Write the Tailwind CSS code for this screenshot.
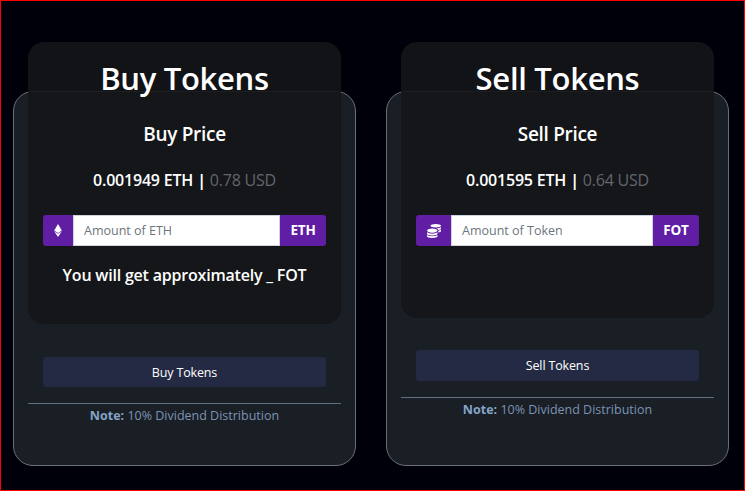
<!DOCTYPE html>
<html lang="en">
<head>
  <meta charset="UTF-8" />
  <meta name="viewport" content="width=device-width, initial-scale=1.0" />
  <title>Token Sale</title>
  <script src="https://cdn.jsdelivr.net/npm/@tailwindcss/browser@4"></script>
</head>
<body class="bg-[#00000a] overflow-hidden">
  <div class="h-[491px] w-[745px] border border-[#ff0000] flex gap-[30px] pl-3 pt-[90px] font-['Open_Sans',sans-serif] text-white">

    <!-- Buy -->
    <div class="w-[343px] h-[375px] rounded-[20px] border border-[#6b7078] bg-[#1a1e25] px-[14px]">
      <div class="h-[282px] -mt-[50px] rounded-[16px] bg-[#141518]/90 px-[15px] pt-[14px] text-center">
        <h1 class="text-[31px] leading-[44px] font-semibold tracking-[-0.3px]">Buy Tokens</h1>
        <h3 class="mt-[21px] text-[19px] leading-[26px] font-semibold tracking-[-0.3px]">Buy Price</h3>
        <p class="mt-[22px] text-[16px] leading-[22px] font-semibold tracking-[-0.2px]">0.001949 ETH <b class="font-bold">|</b> <span class="font-normal text-[#62666c]">0.78 USD</span></p>
        <div class="mt-[24px] h-[31px] flex">
          <span class="w-[30px] flex items-center justify-center rounded-l-[3px] bg-[#5f1ea3]">
            <svg class="w-[8px] h-[13px]" viewBox="0 0 320 512" fill="#fff"><path d="M311.9 260.8L160 353.6 8 260.8 160 0l151.9 260.8zM160 383.4L8 290.6 160 512l152-221.4-152 92.8z"/></svg>
          </span>
          <input type="text" placeholder="Amount of ETH" class="flex-1 min-w-0 bg-white border border-[#ced4da] px-[10px] pt-[2px] text-[12.5px] text-[#495057] placeholder:text-[#6c757d]" />
          <span class="w-[46px] flex items-center justify-center rounded-r-[3px] bg-[#5f1ea3] text-[13.5px] font-bold tracking-[-0.2px]">ETH</span>
        </div>
        <p class="mt-[18px] text-[16px] leading-[22px] font-semibold tracking-[-0.2px]">You will get approximately _ FOT</p>
      </div>
      <div class="px-[15px]">
        <button class="mt-[33px] w-full h-[30px] pt-[2px] rounded-[3px] bg-[#252a44] text-[12.5px] tracking-[-0.15px]">Buy Tokens</button>
      </div>
      <div class="mt-[16px] border-t border-[#5f6e80] pt-[3px] text-center text-[12.5px] leading-[18px] text-[#7b94b4]">
        <b class="font-bold text-[#86a3c8]">Note:</b> 10% Dividend Distribution
      </div>
    </div>

    <!-- Sell -->
    <div class="w-[343px] h-[375px] rounded-[20px] border border-[#6b7078] bg-[#1a1e25] px-[14px]">
      <div class="h-[276px] -mt-[50px] rounded-[16px] bg-[#141518]/90 px-[15px] pt-[14px] text-center">
        <h1 class="text-[31px] leading-[44px] font-semibold tracking-[-0.3px]">Sell Tokens</h1>
        <h3 class="mt-[21px] text-[19px] leading-[26px] font-semibold tracking-[-0.3px]">Sell Price</h3>
        <p class="mt-[22px] text-[16px] leading-[22px] font-semibold tracking-[-0.2px]">0.001595 ETH <b class="font-bold">|</b> <span class="font-normal text-[#62666c]">0.64 USD</span></p>
        <div class="mt-[24px] h-[31px] flex">
          <span class="w-[35px] flex items-center justify-center rounded-l-[3px] bg-[#5f1ea3]">
            <svg class="w-[14px] h-[14px]" viewBox="0 0 512 512" fill="#fff"><path d="M0 405.3V448c0 35.3 86 64 192 64s192-28.7 192-64v-42.7C342.7 434.4 267.2 448 192 448S41.3 434.4 0 405.3zM320 128c106 0 192-28.7 192-64S426 0 320 0 128 28.7 128 64s86 64 192 64zM0 300.4V352c0 35.3 86 64 192 64s192-28.7 192-64v-51.6c-41.3 34-116.9 51.6-192 51.6S41.3 334.4 0 300.4zm416 11c57.3-11.1 96-31.7 96-55.4v-42.7c-23.2 16.4-57.3 27.6-96 34.5v63.6zM192 160C86 160 0 195.8 0 240s86 80 192 80 192-35.8 192-80-86-80-192-80zm219.3 56.3c60-10.8 100.7-32 100.7-56.3v-42.7c-35.5 25.1-96.5 38.6-160.7 41.8 29.5 14.3 51.2 33.5 60 57.2z"/></svg>
          </span>
          <input type="text" placeholder="Amount of Token" class="flex-1 min-w-0 bg-white border border-[#ced4da] px-[10px] pt-[2px] text-[12.5px] text-[#495057] placeholder:text-[#6c757d]" />
          <span class="w-[46px] flex items-center justify-center rounded-r-[3px] bg-[#5f1ea3] text-[13.5px] font-bold tracking-[-0.2px]">FOT</span>
        </div>
      </div>
      <div class="px-[15px]">
        <button class="mt-[32px] w-full h-[31px] pt-[2px] rounded-[3px] bg-[#252a44] text-[12.5px] tracking-[-0.15px]">Sell Tokens</button>
      </div>
      <div class="mt-[16px] border-t border-[#5f6e80] pt-[3px] text-center text-[12.5px] leading-[18px] text-[#7b94b4]">
        <b class="font-bold text-[#86a3c8]">Note:</b> 10% Dividend Distribution
      </div>
    </div>

  </div>
</body>
</html>
